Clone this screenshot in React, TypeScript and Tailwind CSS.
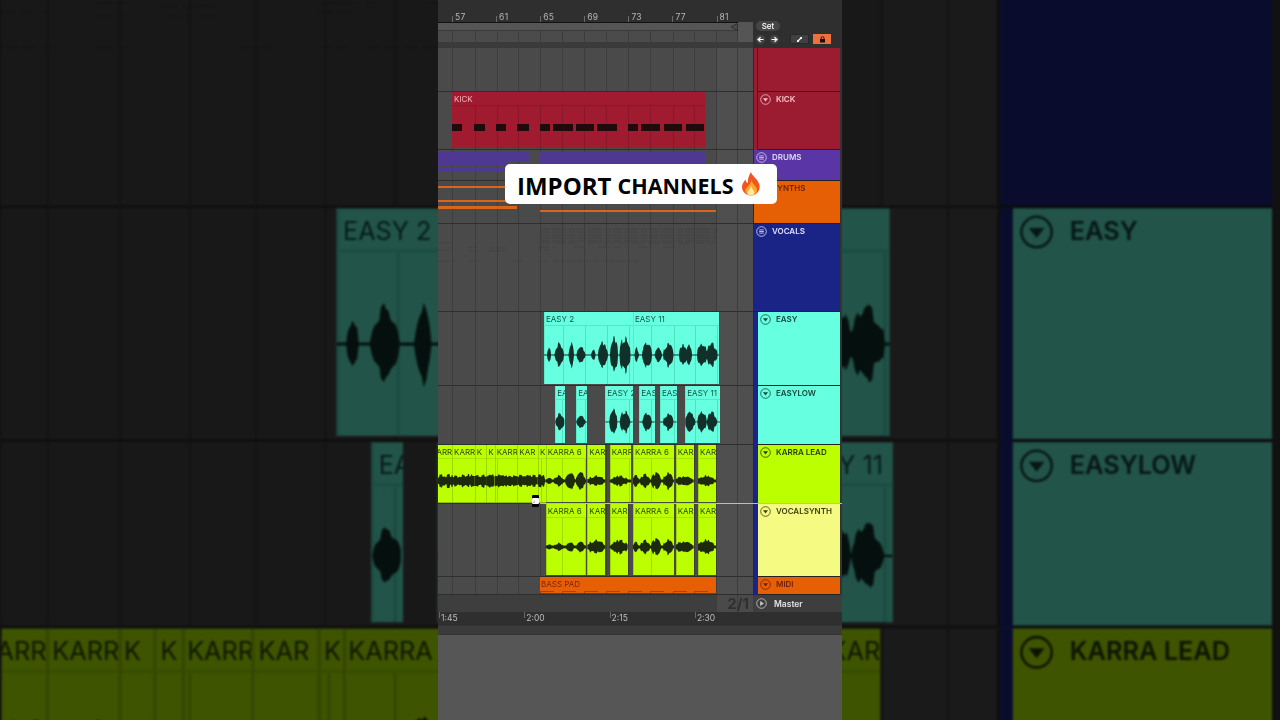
import type { ReactNode } from "react"

type ClipData = { x: number; w: number; label: string }
type Blob = [number, number, number]

const GRID = [14, 36.5, 58.5, 79.5, 102, 123.5, 146, 167.5, 190, 212, 234.5, 256, 278, 299]

const themes = {
  mint: { box: "bg-[#66ffdf] text-[#14524a]", head: "border-[#55e8c8]", line: "bg-[#52e2c2]", edge: "border-[#58eccb]" },
  lime: { box: "bg-[#bbff00] text-[#2f4400]", head: "border-[#a6e600]", line: "bg-[#9fdc00]", edge: "border-[#9cd800]" },
}

const easyClips: ClipData[] = [
  { x: 106, w: 89, label: "EASY 2" },
  { x: 195, w: 86, label: "EASY 11" },
]
const easyLowClips: ClipData[] = [
  { x: 117.3, w: 9.4, label: "EASY" },
  { x: 138.3, w: 10.7, label: "EASY" },
  { x: 167.3, w: 27.7, label: "EASY 2" },
  { x: 201.3, w: 15.7, label: "EASY" },
  { x: 222, w: 16.7, label: "EASY" },
  { x: 247.3, w: 34.7, label: "EASY 11" },
]
const leadClips: ClipData[] = [
  { x: -9, w: 23, label: "KARR" },
  { x: 14, w: 22.7, label: "KARRA" },
  { x: 36.7, w: 11.6, label: "K" },
  { x: 48.3, w: 8.4, label: "K" },
  { x: 56.7, w: 22.6, label: "KARRA" },
  { x: 79.3, w: 20.7, label: "KAR" },
  { x: 100, w: 7.7, label: "K" },
  { x: 107.7, w: 40.6, label: "KARRA 6" },
  { x: 149.3, w: 18, label: "KARRA" },
  { x: 171.7, w: 21.6, label: "KARRA" },
  { x: 195, w: 41, label: "KARRA 6" },
  { x: 237.7, w: 18, label: "KARRA" },
  { x: 260, w: 18.3, label: "KARRA" },
]
const synthClips: ClipData[] = [
  { x: 107.7, w: 40.6, label: "KARRA 6" },
  { x: 149.3, w: 18, label: "KARRA" },
  { x: 171.7, w: 18.3, label: "KARRA" },
  { x: 195, w: 41, label: "KARRA 6" },
  { x: 237.7, w: 18, label: "KARRA" },
  { x: 260, w: 18.3, label: "KARRA" },
]

const easyBlobs: Blob[] = [
  [111, 2, 11], [121.3, 4.5, 15], [133.3, 2.5, 14], [143, 4.5, 9], [155.3, 2, 8], [165, 5, 15], [176, 4, 20], [187, 5.5, 22],
  [198.7, 2, 9], [209, 5, 15], [220.3, 3.5, 8], [230.3, 5, 14], [245, 4, 14], [251, 3, 12], [264, 5, 14], [274, 5.5, 14],
]
const easyLowBlobs: Blob[] = [
  [122, 4.5, 11], [143, 4.5, 7], [175.3, 4, 15], [187, 5, 14], [209, 4.5, 11], [230.3, 5, 10], [252, 5, 12], [264, 4.5, 13], [274, 5, 12],
]
const leadBlobs: Blob[] = [
  [111, 3, 5], [120.7, 5, 7], [132, 5, 10], [142.7, 5, 10], [158, 9, 6], [181.7, 9, 6], [198, 3.5, 7], [207, 5, 8], [218, 5, 10], [230, 5, 10], [246, 9, 6], [268, 9, 6],
]
const synthBlobs: Blob[] = [
  [111, 3, 4], [120.7, 5, 5], [132, 4, 6], [142.7, 4.5, 6], [158, 9, 8], [181.7, 9, 8], [198, 3, 6], [207, 5, 8], [218, 5, 10], [230, 5, 9], [246, 9, 7], [268, 9, 8],
]

const kickNotes = [[14, 10], [36, 10.7], [58, 10.3], [79.3, 11.4], [102, 10.3], [115.3, 19.4], [138, 18], [159.3, 19.4], [190, 10], [203.3, 18.4], [226, 18], [248, 18]]

// pseudo random, so the wave keeps its shape from one run to the next
function noise(x: number) {
  const n = Math.sin(x * 12.9898) * 43758.5453
  return n - Math.floor(n)
}

function wavePath(clips: ClipData[], blobs: Blob[], cy: number, floor: number, noisyUntil = 0) {
  let d = ""
  for (const clip of clips) {
    const top: string[] = []
    const bottom: string[] = []
    const start = Math.max(clip.x, 0)
    for (let x = start; x <= clip.x + clip.w; x += 0.5) {
      const coarse = Math.floor(x / 1.5)
      let amp = x < noisyUntil ? 3.5 + noise(coarse * 0.31) * 3.5 : floor
      for (const [c, hw, a] of blobs) {
        const t = Math.abs(x - c) / hw
        if (t < 1) amp = Math.max(amp, a * Math.pow(1 - t, 0.4) * (0.6 + noise(coarse) * 0.4))
      }
      top.push(`${x} ${(cy - amp).toFixed(2)}`)
      bottom.unshift(`${x} ${(cy + amp * (0.85 + noise(coarse + 7) * 0.2)).toFixed(2)}`)
    }
    d += `M${top.join("L")}L${bottom.join("L")}Z`
  }
  return d
}

function Wave({ d, color }: { d: string; color: string }) {
  return (
    <svg className="absolute inset-0 h-full w-full" fill={color}>
      <path d={d} />
    </svg>
  )
}

function Clip({ clip, theme }: { clip: ClipData; theme: keyof typeof themes }) {
  const t = themes[theme]
  return (
    <div
      className={`absolute top-0 bottom-[1px] overflow-hidden border-l ${t.box} ${t.edge}`}
      style={{ left: clip.x, width: clip.w }}
    >
      <div className={`h-[14px] whitespace-nowrap border-b pl-[1px] text-[8px] leading-[15px] ${t.head}`}>{clip.label}</div>
      {GRID.filter((g) => g > clip.x + 1 && g < clip.x + clip.w - 1).map((g) => (
        <div key={g} className={`absolute top-[14px] bottom-0 w-[1px] ${t.line}`} style={{ left: g - clip.x }} />
      ))}
    </div>
  )
}

function GridLines() {
  return (
    <>
      {GRID.map((g) => (
        <div key={g} className="absolute inset-y-0 w-[1px] bg-[#3d3d3d]" style={{ left: g }} />
      ))}
    </>
  )
}

function FoldIcon({ color }: { color: string }) {
  return (
    <svg width="11" height="11" viewBox="0 0 11 11" className="shrink-0">
      <circle cx="5.5" cy="5.5" r="4.8" fill="none" stroke={color} strokeWidth="0.8" />
      <path d="M3 4.2H8L5.5 7.4Z" fill={color} />
    </svg>
  )
}

function GroupIcon({ color }: { color: string }) {
  return (
    <svg width="11" height="11" viewBox="0 0 11 11" className="shrink-0">
      <circle cx="5.5" cy="5.5" r="4.8" fill="none" stroke={color} strokeWidth="0.8" />
      <path d="M3.2 3.9H7.8M3.2 5.5H7.8M3.2 7.1H7.8" stroke={color} strokeWidth="0.8" />
    </svg>
  )
}

type RowProps = {
  height: string
  head: string
  strip: string
  text?: string
  label?: string
  color?: string
  group?: boolean
  children?: ReactNode
}

function Row({ height, head, strip, text, label, color = "#fff", group, children }: RowProps) {
  return (
    <div className={`flex ${height}`}>
      <div className="relative w-[315px] overflow-hidden border-b border-[#2e2e2e] bg-[linear-gradient(90deg,#4a4a4a_278px,#4f4f4f_278px)]">
        <GridLines />
        {children}
      </div>
      <div className="w-[1px] bg-[#2a2a2a]" />
      {group ? null : <div className={`w-[4px] ${strip}`} />}
      <div className={`flex items-start gap-[5px] border-b border-[#222] pl-[2px] pt-[2px] ${group ? "w-[86px]" : "w-[82px]"} ${head}`}>
        {label ? (
          <>
            {group ? <GroupIcon color={color} /> : <FoldIcon color={color} />}
            <span className={`text-[8px] font-semibold leading-[11px] ${text}`}>{label}</span>
          </>
        ) : null}
      </div>
      <div className="w-[2px] bg-[#333]" />
    </div>
  )
}

function TopBar() {
  return (
    <div className="flex h-[48px] bg-[#2f2f2f]">
      <div className="flex w-[315px] flex-col">
        <div className="flex h-[22px] items-end pl-[14px]">
          {[57, 61, 65, 69, 73, 77, 81].map((n) => (
            <div key={n} className="flex h-[7px] w-[44.1px] shrink-0 items-end gap-[2px]">
              <div className="h-[6px] w-[1px] bg-[#6a6a6a]" />
              <span className="text-[8.5px] leading-[9px] tracking-[0.3px] text-[#b5b5b5]">{n}</span>
            </div>
          ))}
        </div>
        <div className="flex h-[20px]">
          <div className="flex w-[300px] flex-col border-t border-[#111]">
            <div className="relative h-[8px] border-b border-[#3a3a3a] bg-[#555]">
              <svg className="absolute right-0 top-[0px]" width="8" height="8" viewBox="0 0 8 8">
                <path d="M7.5 0.5V7.5L1 4Z" fill="#4c4c4c" stroke="#222" strokeWidth="0.7" />
              </svg>
            </div>
            <div className="relative flex-1 bg-[#4b4b4b]">
              <GridLines />
            </div>
          </div>
          <div className="w-[15px] bg-[#555]" />
        </div>
        <div className="h-[6px] bg-[#3a3a3a]" />
      </div>
      <div className="flex flex-1 flex-col pl-[3px] pt-[21px]">
        <div className="flex h-[10px] w-[24px] items-center justify-center rounded-full bg-[#454545] text-[8px] font-medium text-white">Set</div>
        <div className="mt-[3px] flex items-center">
          <div className="flex h-[9px] w-[9px] items-center justify-center rounded-full bg-[#454545]">
            <svg width="7" height="7" viewBox="0 0 7 7"><path d="M6.5 3.5H2M3.6 1.2L1 3.5L3.6 5.8" fill="none" stroke="#fff" strokeWidth="1.2" /></svg>
          </div>
          <div className="ml-[5px] flex h-[9px] w-[9px] items-center justify-center rounded-full bg-[#454545]">
            <svg width="7" height="7" viewBox="0 0 7 7"><path d="M0.5 3.5H5M3.4 1.2L6 3.5L3.4 5.8" fill="none" stroke="#fff" strokeWidth="1.2" /></svg>
          </div>
          <div className="ml-[11px] flex h-[10px] w-[19px] items-center justify-center border border-[#282828] bg-[#404040]">
            <svg width="7" height="7" viewBox="0 0 7 7"><path d="M1.5 5.5L5.5 1.5" fill="none" stroke="#fff" strokeWidth="1.1" /><path d="M3.8 1H6V3.2ZM1 3.8V6H3.2Z" fill="#fff" /></svg>
          </div>
          <div className="ml-[4px] flex h-[10px] w-[18px] items-center justify-center bg-[#f0703c]">
            <svg width="7" height="7" viewBox="0 0 7 7"><path d="M2 3.2V2.2a1.5 1.5 0 0 1 3 0v1" fill="none" stroke="#111" strokeWidth="0.9" /><rect x="1" y="3" width="5" height="3.5" fill="#111" /></svg>
          </div>
        </div>
      </div>
    </div>
  )
}

function Session() {
  return (
    <div className="relative flex h-[720px] w-[404px] flex-col bg-[#565656] font-['Inter',sans-serif]">
      <TopBar />
      <Row height="h-[44px]" head="bg-[#9b1c30]" strip="bg-[#9b1c30] border-r border-[#5c1220]" />
      <Row height="h-[58px]" head="bg-[#9b1c30]" strip="bg-[#9b1c30] border-r border-[#5c1220]" label="KICK" text="text-[#f3c4c9]" color="#f3c4c9">
        <div className="absolute bottom-[1px] left-[14px] top-0 w-[253px] overflow-hidden bg-[#a01b30]">
          <div className="h-[14px] border-b border-[#8c1729] pl-[2px] text-[8px] leading-[15px] text-[#f3b4bd]">KICK</div>
          {GRID.filter((g) => g > 15 && g < 267).map((g) => (
            <div key={g} className="absolute top-[14px] bottom-0 w-[1px] bg-[#8a1729]" style={{ left: g - 14 }} />
          ))}
        </div>
        {kickNotes.map(([x, w]) => (
          <div key={x} className="absolute top-[32px] h-[7px] bg-[#1f0a0d]" style={{ left: x, width: w }} />
        ))}
      </Row>
      <Row height="h-[31px]" head="bg-[#5a35a5]" strip="" group label="DRUMS" text="text-[#ded6f7]" color="#ded6f7">
        <div className="absolute left-0 top-[2px] h-[9px] w-[91px] bg-[#4e3892]" />
        <div className="absolute left-0 top-[11px] h-[4px] w-[70px] bg-[#4e3892]" />
        <div className="absolute left-0 top-[17px] h-[4px] w-[68px] bg-[#4e3892]" />
        <div className="absolute left-[102px] top-[2px] h-[12px] w-[165px] bg-[#4e3892]" />
      </Row>
      <Row height="h-[43px]" head="bg-[#e75f05]" strip="" group label="SYNTHS" text="text-[#6b2408]" color="#6b2408">
        <div className="absolute left-0 top-[5px] h-[2px] w-[70px] bg-[#d9651c]" />
        <div className="absolute left-0 top-[19px] h-[1.5px] w-[68px] bg-[#d9651c]" />
        <div className="absolute left-0 top-[25px] h-[3px] w-[79px] bg-[#d9651c]" />
        <div className="absolute left-[102px] top-[29px] h-[2px] w-[176px] bg-[#d9651c]" />
      </Row>
      <Row height="h-[88px]" head="bg-[#1a2487]" strip="" group label="VOCALS" text="text-[#dfe2fa]" color="#dfe2fa">
        <svg className="absolute inset-0 h-full w-full opacity-50" stroke="#3c3c3c" strokeWidth="1" strokeDasharray="9 2 14 3 6 2">
          <path d="M103 5H280M103 8H280M103 11H278M103 14H278M103 17H276" />
          <path d="M100 19H140M150 19H278M100 23H118M135 23H150M160 23H182M200 23H210M225 23H240" strokeDasharray="12 3" />
          <path d="M0 19H14M30 23H40M51 24H68M100 26H112M0 26H15M51 27H68M30 27H40M0 37H18M30 37H42M75 37H85M100 37H110M115 37H160M165 37H200" strokeDasharray="5 1" />
        </svg>
      </Row>
      <Row height="h-[74px]" head="bg-[#66ffdf]" strip="bg-[#1a2487]" label="EASY" text="text-[#14463c]" color="#14463c">
        {easyClips.map((c) => <Clip key={c.x} clip={c} theme="mint" />)}
        <Wave d={wavePath(easyClips, easyBlobs, 43, 0.5)} color="#103029" />
      </Row>
      <Row height="h-[59px]" head="bg-[#66ffdf]" strip="bg-[#1a2487]" label="EASYLOW" text="text-[#14463c]" color="#14463c">
        {easyLowClips.map((c) => <Clip key={c.x} clip={c} theme="mint" />)}
        <Wave d={wavePath(easyLowClips, easyLowBlobs, 36, 0.4)} color="#103029" />
      </Row>
      <Row height="h-[59px]" head="bg-[#bbff00]" strip="bg-[#1a2487]" label="KARRA LEAD" text="text-[#2a3a00]" color="#2a3a00">
        <div className="absolute inset-y-0 left-0 w-[108px] bg-[#8fbf10]" />
        {leadClips.map((c) => <Clip key={c.x} clip={c} theme="lime" />)}
        <Wave d={wavePath(leadClips, leadBlobs, 36, 1.5, 107)} color="#1e2a0e" />
      </Row>
      <Row height="h-[73px]" head="bg-[#f5fb82]" strip="bg-[#1a2487]" label="VOCALSYNTH" text="text-[#3c3d12]" color="#3c3d12">
        {synthClips.map((c) => <Clip key={c.x} clip={c} theme="lime" />)}
        <Wave d={wavePath(synthClips, synthBlobs, 43, 1.5)} color="#1e2a0e" />
      </Row>
      <Row height="h-[18px]" head="bg-[#e75f05]" strip="bg-[#1a2487]" label="MIDI" text="text-[#6e1e06]" color="#6e1e06">
        <div className="absolute bottom-[1px] left-[102px] top-0 w-[176px] overflow-hidden bg-[#e75f05] pl-[1px] text-[8px] leading-[15px] text-[#7c2408]">
          BASS PAD
          {GRID.filter((g) => g >= 102 && g < 278).map((g) => (
            <div key={g} className="absolute bottom-0 h-[2px] w-[14px] border-l border-t border-[#a84408]" style={{ left: g - 102 }} />
          ))}
        </div>
      </Row>
      <div className="flex h-[17px]">
        <div className="relative flex w-[315px] justify-end bg-[linear-gradient(90deg,#3e3e3e_278px,#4a4a4a_278px)]">
          <GridLines />
          <span className="relative pr-[4px] text-[15px] font-bold leading-[17px] text-[#2f2f2f]">2/1</span>
        </div>
        <div className="flex flex-1 items-center gap-[7px] bg-[#3e3e3e] pl-[3px]">
          <svg width="11" height="11" viewBox="0 0 11 11">
            <circle cx="5.5" cy="5.5" r="4.8" fill="none" stroke="#ccc" strokeWidth="0.8" />
            <path d="M4.2 3V8L7.8 5.5Z" fill="#ccc" />
          </svg>
          <span className="pt-[1px] text-[8.5px] font-semibold leading-[13px] text-[#e2e2e2]">Master</span>
        </div>
      </div>
      <div className="flex h-[13px] bg-[#2f2f2f] pl-[1px]">
        {["1:45", "2:00", "2:15", "2:30"].map((t) => (
          <div key={t} className="flex w-[85.3px] gap-[1px]">
            <div className="h-[6px] w-[1px] bg-[#666]" />
            <span className="text-[8.5px] leading-[13px] text-[#bdbdbd]">{t}</span>
          </div>
        ))}
      </div>
      <div className="h-[10px] border-y border-[#333] bg-[#3b3b3b]" />
      <div className="absolute left-[102px] right-0 top-[503px] h-[1px] bg-[#bdbdbd]" />
      <div className="absolute left-[94px] top-[495px] flex h-[12px] w-[7px] flex-col overflow-hidden rounded-[1px] bg-black">
        <div className="mt-[3px] flex h-[6px] items-center justify-center rounded-[1px] bg-white text-[5px] leading-none text-black">♩</div>
      </div>
    </div>
  )
}

function Flame() {
  return (
    <svg width="20" height="24" viewBox="0 0 20 24" className="shrink-0">
      <path d="M10 0C11 4 17 7 18.5 13C19.5 19 15 23.5 10 23.5C5 23.5 0.5 19.5 1 14C1.5 11 3.5 9 4.5 7.5C5 10 6 11 7 11C6.5 7 8 3 10 0Z" fill="#f2551f" />
      <path d="M10.5 8C11 12 16 14 16 18C16 21 13 23.5 10 23.5C7 23.5 4 21 4.5 18C5 15.5 9.5 13 10.5 8Z" fill="#ffa726" />
      <path d="M10 14C11 17 13.5 19 13.5 21C13.5 22.6 11.5 23.5 10 23.5C8.5 23.5 6.5 22.5 6.5 21C6.5 19 9.5 17 10 14Z" fill="#ffe9a8" />
    </svg>
  )
}

export default function App() {
  return (
    <div className="relative h-[720px] w-[1280px] overflow-hidden bg-[#111]">
      {/* blurred, darkened copy of the same video frame behind the portrait crop */}
      <div aria-hidden className="absolute inset-0 flex items-center justify-center">
        <div className="shrink-0 scale-[3.16] blur-[0.4px] brightness-[0.33]">
          <Session />
        </div>
      </div>
      <div className="relative mx-auto h-[720px] w-[404px]">
        <div className="blur-[0.25px]">
          <Session />
        </div>
        <div className="absolute left-[67px] top-[164px] flex h-[40px] w-[272px] items-center rounded-[5px] bg-white pl-[12px] pt-[3px] font-['Open_Sans',sans-serif] font-bold text-black">
          <span className="text-[24px] leading-none">IMPORT</span>
          <span className="ml-[6px] text-[21.5px] leading-none">CHANNELS</span>
          <span className="ml-[8px] -mt-[3px]"><Flame /></span>
        </div>
      </div>
    </div>
  )
}
